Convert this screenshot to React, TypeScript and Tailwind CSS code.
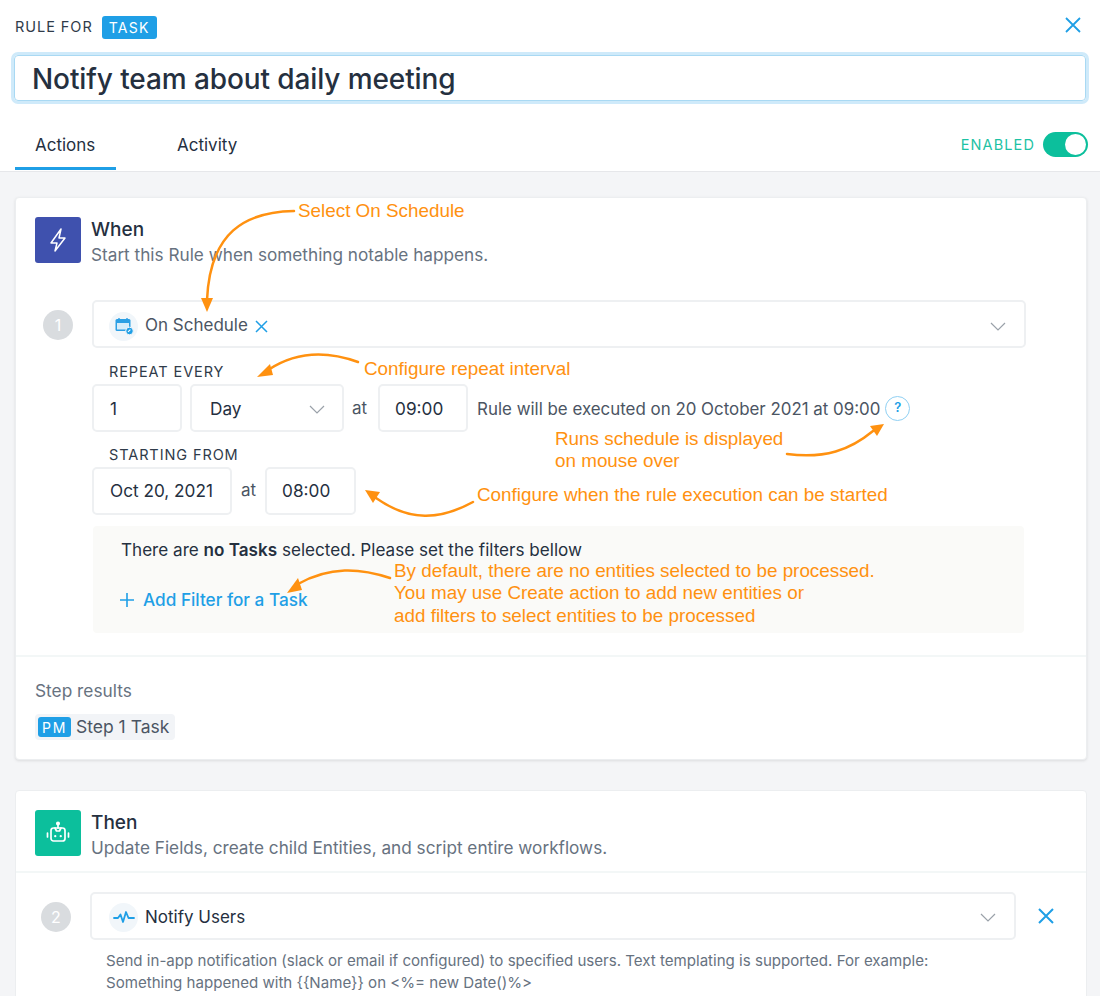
import React from "react";

const Chevron = () => (
  <svg width="16" height="9" viewBox="0 0 16 9" fill="none" stroke="#9aa1a9" strokeWidth="1.2" className="shrink-0">
    <path d="M1 1l7 7 7-7" />
  </svg>
);

const Cross = ({ size, sw, className = "" }: { size: number; sw: number; className?: string }) => (
  <svg width={size} height={size} viewBox={`0 0 ${size} ${size}`} fill="none" stroke="#1f9fe6" strokeWidth={sw} className={`shrink-0 ${className}`}>
    <path d={`M1 1L${size - 1} ${size - 1}M${size - 1} 1L1 ${size - 1}`} />
  </svg>
);

const Box = ({ w, children, className = "" }: { w: string; children?: React.ReactNode; className?: string }) => (
  <div className={`${w} h-[48px] shrink-0 rounded-[5px] border-2 border-[#eef0f2] bg-white flex items-center text-[17.2px] text-[#25303f] ${className}`}>{children}</div>
);

const Note = ({ className, children }: { className: string; children: React.ReactNode }) => (
  <div className={`absolute font-['Liberation_Sans',sans-serif] text-[18.85px] leading-[22px] text-[#ff9110] whitespace-nowrap ${className}`}>{children}</div>
);

const Circle = ({ n }: { n: number }) => (
  <div className="w-[30px] h-[30px] rounded-full bg-[#d9dcdf] text-white flex items-center justify-center text-[16px] shrink-0">{n}</div>
);

export default function App() {
  return (
    <div className="relative w-[1100px] h-[996px] overflow-hidden bg-[#f4f5f7] font-['Inter',sans-serif] text-[#25303f]">
      <header className="h-[172px] bg-white border-b border-[#e6e7ea] px-[15px] pt-[15px]">
        <div className="flex items-center h-[24px]">
          <span className="text-[14.5px] tracking-[0.95px] text-[#2f3b4a]">RULE FOR</span>
          <span className="ml-[9px] h-[23px] px-[7px] rounded-[3px] bg-[#1f9fe6] text-white text-[14px] tracking-[1.3px] flex items-center">TASK</span>
          <Cross size={16} sw={1.8} className="ml-auto mr-[4px] mt-[-4px]" />
        </div>
        <div className="mt-[16px] h-[46px] mx-[-1px] rounded-[4px] border border-[#a9d9f3] ring-[3px] ring-[#cfeafa] flex items-center pl-[17px] pt-[2px] text-[28px] leading-none font-medium tracking-[-0.1px] text-[#25303f]">
          Notify team about daily meeting
        </div>
        <div className="flex items-start mt-[31px]">
          <div className="w-[101px] pl-[20px] text-[17px] leading-[26px] h-[38px] border-b-[3px] border-[#1f9fe6]">Actions</div>
          <div className="ml-[61px] text-[17px] leading-[26px]">Activity</div>
          <div className="ml-auto flex items-center mr-[-3px]">
            <span className="text-[14.5px] tracking-[1.1px] text-[#1dc2a4]">ENABLED</span>
            <div className="ml-[8px] w-[45px] h-[25px] rounded-full bg-[#0cbf9c] flex items-center justify-end pr-[2px]">
              <div className="w-[21px] h-[21px] rounded-full bg-white" />
            </div>
          </div>
        </div>
      </header>

      <section className="ml-[15px] w-[1072px] mt-[25px] h-[563px] bg-white rounded-[4px] border border-[#eceef0] shadow-[0_1px_3px_rgba(0,0,0,0.10)]">
        <div className="flex items-start pl-[19px] pt-[19px]">
          <div className="w-[46px] h-[46px] rounded-[3px] bg-[#3f51ae]">
            <svg width="46" height="46" viewBox="0 0 46 46" fill="none" stroke="#fff" strokeWidth="1.5" strokeLinejoin="round">
              <path d="M26 12L16 26H22L20 34L30 21H24Z" />
            </svg>
          </div>
          <div className="ml-[10px]">
            <div className="text-[19px] leading-[24px] font-medium mt-[1px]">When</div>
            <div className="text-[17.2px] leading-[24px] text-[#67727f] mt-[1px]">Start this Rule when something notable happens.</div>
          </div>
        </div>

        <div className="flex items-start mt-[33px] pl-[27px]">
          <div className="mt-[10px]"><Circle n={1} /></div>
          <div className="ml-[19px] w-[934px]">
            <div className="h-[48px] rounded-[5px] border-2 border-[#eef0f2] flex items-center pl-[15px] pr-[18px] pt-[4px]">
              <span className="w-[29px] h-[29px] rounded-full bg-[#f1f6fa] flex items-center justify-center">
                <svg width="20" height="20" viewBox="0 0 20 20">
                  <rect x="1.5" y="3" width="15" height="12" rx="1.5" fill="#2b9fe4" />
                  <rect x="3" y="7" width="12" height="6.5" fill="#d5ecfa" />
                  <path d="M5 2v3M13 2v3" stroke="#2b9fe4" strokeWidth="1.4" />
                  <circle cx="15.5" cy="15" r="3.8" fill="#1f9fe6" stroke="#f1f6fa" />
                  <path d="M14 15.8l2.4-2.2" stroke="#fff" strokeWidth="1.1" />
                </svg>
              </span>
              <span className="ml-[7px] text-[17px] text-[#4b5563]">On Schedule</span>
              <span className="ml-[7px]"><Cross size={13} sw={1.5} /></span>
              <span className="ml-auto"><Chevron /></span>
            </div>
            <div className="mt-[14px] pl-[17px] text-[14.5px] leading-[20px] tracking-[0.9px] text-[#2f3b4a]">REPEAT EVERY</div>
            <div className="mt-[2px] flex items-center">
              <Box w="w-[90px]" className="pl-[16px] pt-[2px]">1</Box>
              <Box w="w-[154px]" className="ml-[8px] pl-[18px] pr-[17px] pt-[2px] justify-between">
                Day
                <Chevron />
              </Box>
              <span className="ml-[8px] pt-[2px] text-[17px] text-[#4b5563]">at</span>
              <Box w="w-[90px]" className="ml-[11px] pl-[15px] pt-[2px]">09:00</Box>
              <span className="ml-[9px] pt-[3px] text-[16.9px] text-[#4b5563] whitespace-nowrap">Rule will be executed on 20 October 2021 at 09:00</span>
              <span className="ml-[5px] w-[25px] h-[25px] rounded-full border border-[#8fd0f3] flex items-center justify-center text-[13px] font-semibold text-[#1f9fe6]">?</span>
            </div>
            <div className="mt-[13px] pl-[17px] text-[14.5px] leading-[20px] tracking-[0.9px] text-[#2f3b4a]">STARTING FROM</div>
            <div className="mt-[2px] flex items-center">
              <Box w="w-[140px]" className="pl-[16px]">Oct 20, 2021</Box>
              <span className="ml-[9px] text-[17px] text-[#4b5563]">at</span>
              <Box w="w-[91px]" className="ml-[9px] pl-[15px]">08:00</Box>
            </div>
            <div className="mt-[11px] ml-[1px] w-[931px] h-[107px] rounded-[4px] bg-[#fafaf8] pl-[28px] pt-[13px]">
              <div className="text-[17.1px] leading-[22px] text-[#25303f]">There are <b className="font-semibold">no Tasks</b> selected. Please set the filters bellow</div>
              <div className="flex items-center mt-[28px] text-[#1f9fe6] text-[17.2px] leading-[22px] font-medium">
                <svg width="14" height="14" viewBox="0 0 14 14" fill="none" stroke="#1f9fe6" strokeWidth="1.6" className="ml-[-1px]">
                  <path d="M7 0v14M0 7h14" />
                </svg>
                <span className="ml-[9px]">Add Filter for a Task</span>
              </div>
            </div>
          </div>
        </div>

        <div className="mt-[22px] border-t-2 border-[#f3f7f7] pl-[19px] pt-[22px]">
          <div className="text-[17.3px] leading-[24px] text-[#67727f]">Step results</div>
          <div className="mt-[11px] w-[140px] h-[26px] rounded-[4px] bg-[#f2f4f7] flex items-center pl-[3px] text-[17.5px] text-[#4b5563]">
            <span className="w-[33px] h-[20px] rounded-[3px] bg-[#1f9fe6] text-white text-[14px] tracking-[1.6px] flex items-center justify-center">PM</span>
            <span className="ml-[5px] whitespace-nowrap">Step 1 Task</span>
          </div>
        </div>
      </section>

      <section className="ml-[15px] w-[1072px] mt-[30px] h-[300px] bg-white rounded-[4px] border border-[#eceef0]">
        <div className="flex items-start pl-[19px] pt-[19px] h-[82px] border-b-2 border-[#f3f7f7]">
          <div className="w-[46px] h-[46px] rounded-[3px] bg-[#0cbf9c] flex items-center justify-center">
            <svg width="28" height="28" viewBox="0 0 28 28" fill="none" stroke="#fff" strokeWidth="1.7" strokeLinecap="round" strokeLinejoin="round">
              <circle cx="14" cy="4.5" r="1.2" fill="#fff" />
              <path d="M14 5.5V9" />
              <rect x="7" y="9" width="14" height="13" rx="2.5" />
              <path d="M11 9l1.5 3h3L17 9" />
              <path d="M11.2 17.2h.1M16.7 17.2h.1" strokeWidth="2.2" />
              <path d="M3.5 14v4M24.5 14v4" />
            </svg>
          </div>
          <div className="ml-[10px]">
            <div className="text-[19px] leading-[24px] font-medium mt-[1px]">Then</div>
            <div className="text-[17.2px] leading-[24px] text-[#67727f] mt-[1px]">Update Fields, create child Entities, and script entire workflows.</div>
          </div>
        </div>
        <div className="flex items-start pl-[25px] pt-[19px]">
          <div className="mt-[10px]"><Circle n={2} /></div>
          <div className="ml-[19px] w-[926px]">
            <div className="h-[48px] rounded-[5px] border-2 border-[#eef0f2] flex items-center pl-[17px] pr-[18px] pt-[3px]">
              <span className="w-[29px] h-[29px] rounded-full bg-[#f1f6fa] flex items-center justify-center">
                <svg width="22" height="22" viewBox="0 0 22 22" fill="none" stroke="#1f9fe6" strokeWidth="1.8" strokeLinecap="round" strokeLinejoin="round">
                  <path d="M1 11h4l2.5-3.5L10 15l3-10 2.5 6H21" />
                </svg>
              </span>
              <span className="ml-[7px] text-[17px] text-[#25303f] pt-[1px]">Notify Users</span>
              <span className="ml-auto"><Chevron /></span>
            </div>
            <div className="pl-[16px] mt-[10px] text-[15.08px] leading-[22px] text-[#67727f] whitespace-nowrap">
              <div>Send in-app notification (slack or email if configured) to specified users. Text templating is supported. For example:</div>
              <div>{"Something happened with {{Name}} on <%= new Date()%>"}</div>
            </div>
          </div>
          <Cross size={16} sw={2} className="ml-[22px] mt-[16px]" />
        </div>
      </section>

      <svg className="absolute inset-0 pointer-events-none" width="1100" height="996" fill="none" stroke="#ff9110" strokeWidth="2.5" strokeLinecap="round">
        <path d="M294 211C245 212 210 232 207 300" />
        <path d="M201 298L213 298L207 312Z" fill="#ff9110" stroke="none" />
        <path d="M358 362C325 350 295 352 268 370" />
        <path d="M270 364L273 375L257 377Z" fill="#ff9110" stroke="none" />
        <path d="M787 454C825 459 850 450 873 431" />
        <path d="M870 426L877 436L884 424Z" fill="#ff9110" stroke="none" />
        <path d="M473 502C440 520 410 522 376 498" />
        <path d="M380 492L373 503L365 490Z" fill="#ff9110" stroke="none" />
        <path d="M390 578C360 568 330 566 298 584" />
        <path d="M298 578L302 590L287 593Z" fill="#ff9110" stroke="none" />
      </svg>
      <Note className="left-[298px] top-[200px]">Select On Schedule</Note>
      <Note className="left-[364px] top-[358px]">Configure repeat interval</Note>
      <Note className="left-[555px] top-[428px]">Runs schedule is displayed</Note>
      <Note className="left-[555px] top-[450px]">on mouse over</Note>
      <Note className="left-[477px] top-[484px]">Configure when the rule execution can be started</Note>
      <Note className="left-[394px] top-[560px]">By default, there are no entities selected to be processed.</Note>
      <Note className="left-[394px] top-[582px]">You may use Create action to add new entities or</Note>
      <Note className="left-[394px] top-[605px]">add filters to select entities to be processed</Note>
    </div>
  );
}
